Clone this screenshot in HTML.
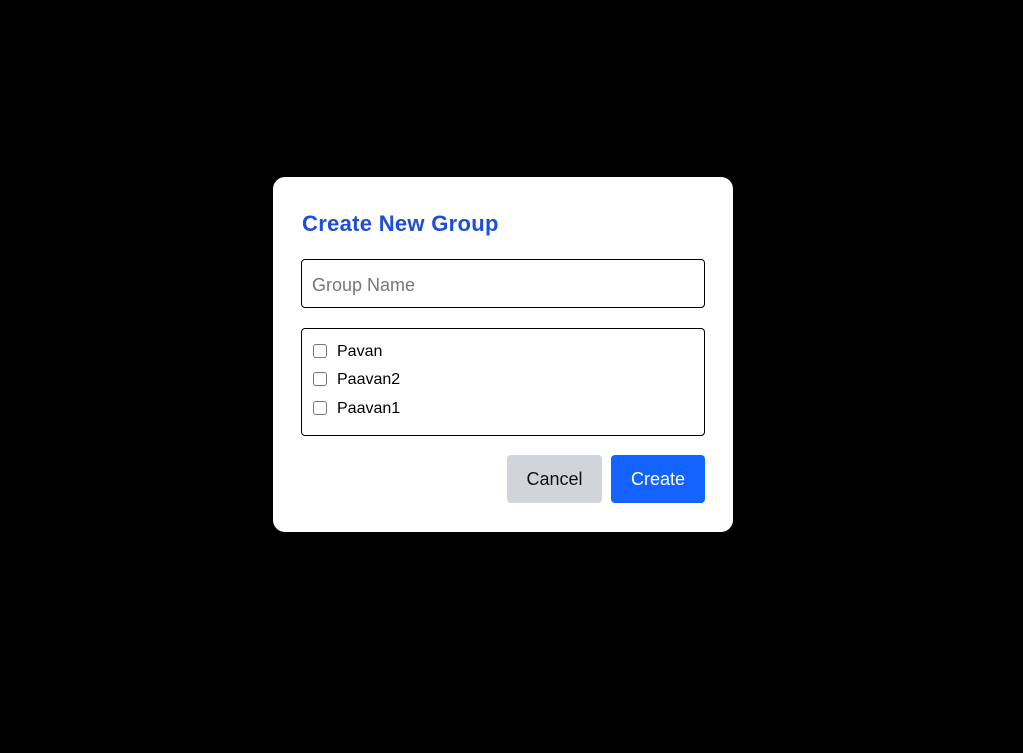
<!DOCTYPE html>
<html><head><style>
*{box-sizing:border-box;margin:0;padding:0}
body{width:1023px;height:753px;background:#000;font-family:"Liberation Sans",sans-serif;position:relative;overflow:hidden}
.m{position:absolute;left:273px;top:177px;width:460px;height:355px;background:#fff;border-radius:12px}
h2{position:absolute;left:29px;top:34px;font-size:22px;font-weight:bold;color:#1d4ed8;letter-spacing:0.3px}
.in{position:absolute;left:28px;top:82px;width:404px;height:49px;border:1px solid #000;border-radius:4px;font-size:18px;color:#777;padding:15px 10px}
.ls{position:absolute;left:28px;top:151px;width:404px;height:108px;border:1px solid #000;border-radius:4px}
.it{position:absolute;left:11px;font-size:16px;color:#000}
.cb{display:inline-block;width:14px;height:14px;border:1px solid #777;border-radius:3px;vertical-align:-2px;margin-right:10px}
.b{position:absolute;top:278px;height:48px;border-radius:4px;font-size:18px;text-align:center;line-height:48px}
</style></head><body>
<div class="m">
<h2>Create New Group</h2>
<div class="in">Group Name</div>
<div class="ls">
<div class="it" style="top:14px"><span class="cb"></span>Pavan</div>
<div class="it" style="top:42px"><span class="cb"></span>Paavan2</div>
<div class="it" style="top:71px"><span class="cb"></span>Paavan1</div>
</div>
<div class="b" style="left:234px;width:95px;background:#d1d5db;color:#111">Cancel</div>
<div class="b" style="left:338px;width:94px;background:#1563ff;color:#fff">Create</div>
</div>
</body></html>
